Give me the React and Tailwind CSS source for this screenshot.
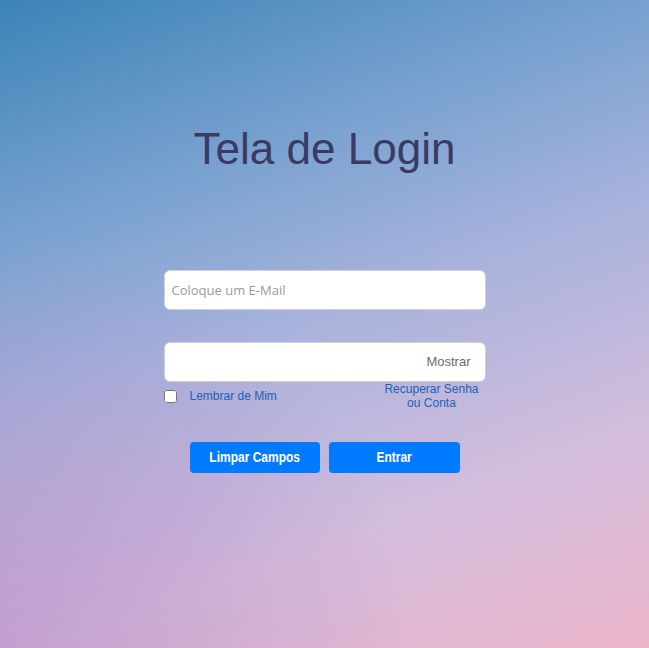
import React from 'react';

export default function App() {
  const [show, setShow] = React.useState(false);
  const [email, setEmail] = React.useState('');
  const [senha, setSenha] = React.useState('');

  return (
    <div className="min-h-[648px] w-full flex flex-col items-center bg-[radial-gradient(circle_at_0%_100%,rgba(185,135,195,0.55),transparent_45%),linear-gradient(160deg,#3b84b7_0%,#7aa2d0_28%,#a6b2dc_48%,#d3bddd_75%,#eab4c8_100%)] font-['Liberation_Sans',Arial,sans-serif]">
      <h1 className="mt-[123px] text-[44px] leading-[52px] text-[#3b3a63]">Tela de Login</h1>

      <form className="mt-[95px] w-[322px] flex flex-col" onSubmit={(e) => e.preventDefault()}>
        <input
          type="email"
          value={email}
          onChange={(e) => setEmail(e.target.value)}
          placeholder="Coloque um E-Mail"
          className="h-10 w-full px-[7px] bg-white border border-[#cfcfd6] rounded-md font-['Open_Sans',sans-serif] text-[13px] text-[#333] placeholder:text-[#9a9a9a] outline-none"
        />

        <div className="mt-8 h-10 w-full flex items-center bg-white border border-[#cfcfd6] rounded-md">
          <input
            type={show ? 'text' : 'password'}
            value={senha}
            onChange={(e) => setSenha(e.target.value)}
            className="flex-1 h-full px-2 bg-transparent rounded-md text-[13px] outline-none"
          />
          <button
            type="button"
            onClick={() => setShow(!show)}
            className="pr-[14px] text-[13px] text-[#6b6b6b]"
          >
            Mostrar
          </button>
        </div>

        <div className="flex items-start justify-between">
          <label className="mt-[5px] flex items-center gap-[13px]">
            <input type="checkbox" className="w-[13px] h-[13px] m-0" />
            <span className="text-[12px] text-[#1f5fb8]">Lembrar de Mim</span>
          </label>
          <a href="#" className="mr-[7px] text-[12px] leading-[14px] text-center text-[#1f5fb8]">
            Recuperar Senha
            <br />
            ou Conta
          </a>
        </div>

        <div className="mt-[32px] flex justify-center gap-[9px]">
          <button
            type="button"
            onClick={() => {
              setEmail('');
              setSenha('');
            }}
            className="w-[130px] h-[31px] rounded bg-[#007bff] text-white text-[15px] font-bold"
          >
            <span className="inline-block scale-x-[0.8]">Limpar Campos</span>
          </button>
          <button type="submit" className="w-[131px] h-[31px] rounded bg-[#007bff] text-white text-[15px] font-bold">
            <span className="inline-block scale-x-[0.8]">Entrar</span>
          </button>
        </div>
      </form>
    </div>
  );
}
